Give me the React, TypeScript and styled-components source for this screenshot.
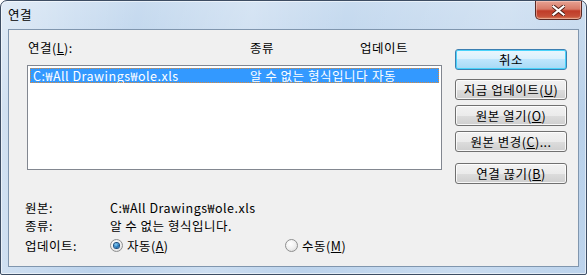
import React from "react";
import styled, { createGlobalStyle } from "styled-components";

const GlobalStyle = createGlobalStyle`
  html, body {
    margin: 0;
    padding: 0;
    background: #ffffff;
  }
  body {
    font-family: "Noto Sans CJK KR", "Noto Sans", sans-serif;
    font-size: 12.5px;
    letter-spacing: 0.5px;
    color: #000;
  }
`;

const Window = styled.div`
  box-sizing: border-box;
  width: 587px;
  height: 275px;
  display: flex;
  flex-direction: column;
  border: 1px solid #3d4d63;
  border-radius: 7px 7px 2px 2px;
  padding: 0 7px 7px 7px;
  background:
    linear-gradient(100deg, rgba(255, 255, 255, 0.45) 0%, rgba(255, 255, 255, 0) 22%,
      rgba(255, 255, 255, 0.25) 40%, rgba(255, 255, 255, 0) 55%,
      rgba(255, 255, 255, 0.2) 80%, rgba(255, 255, 255, 0) 100%),
    linear-gradient(180deg, #c9dcf0 0%, #b6cfe9 40%, #bcd3ec 100%);
  box-shadow: inset 0 0 0 1px rgba(255, 255, 255, 0.55);
`;

const TitleBar = styled.div`
  height: 28px;
  display: flex;
  align-items: flex-start;
  justify-content: space-between;
`;

const Title = styled.div`
  padding-top: 6px;
  line-height: 15px;
  color: #000;
`;

const CloseButton = styled.div`
  box-sizing: border-box;
  width: 47px;
  height: 19px;
  margin-right: -3px;
  display: flex;
  align-items: center;
  justify-content: center;
  border: 1px solid #5a2a24;
  border-top: none;
  border-radius: 0 0 5px 5px;
  background: linear-gradient(180deg, #e6a293 0%, #d77a67 45%, #c03c28 55%, #c64f38 85%, #d9835f 100%);
  box-shadow: inset 0 0 0 1px rgba(255, 220, 210, 0.45);
`;

const Content = styled.div`
  flex: 1;
  display: flex;
  flex-direction: column;
  background: #f0f0f0;
  border: 1px solid #8096ae;
  padding: 10px 0 0 16px;
`;

const TopRow = styled.div`
  display: flex;
  align-items: flex-start;
`;

const ListColumn = styled.div`
  width: 415px;
  margin-left: 2px;
  display: flex;
  flex-direction: column;
`;

const ListHeader = styled.div`
  display: grid;
  grid-template-columns: 222px 110px auto;
  padding-left: 1px;
  line-height: 15px;
  height: 15px;
  margin-bottom: 10px;
`;

const ListBox = styled.div`
  box-sizing: border-box;
  height: 105px;
  background: #fff;
  border: 1px solid #828790;
  padding: 2px;
`;

const ListRow = styled.div<{ $selected?: boolean }>`
  display: grid;
  grid-template-columns: 217px 122px auto;
  height: 15px;
  line-height: 15px;
  padding-left: 3px;
  white-space: nowrap;
  background: ${(p) => (p.$selected ? "#3399ff" : "transparent")};
  color: ${(p) => (p.$selected ? "#fff" : "#000")};
  outline: ${(p) => (p.$selected ? "1px dotted #d9893d" : "none")};
  outline-offset: -1px;
`;

const Cell = styled.span`
  overflow: visible;
`;

const ButtonColumn = styled.div`
  width: 112px;
  margin-left: 13px;
  padding-top: 9px;
  display: flex;
  flex-direction: column;
`;

const Button = styled.div<{ $primary?: boolean; $gap: number }>`
  box-sizing: border-box;
  height: 21px;
  margin-top: ${(p) => p.$gap}px;
  display: flex;
  align-items: center;
  justify-content: center;
  border-radius: 3px;
  border: 1px solid ${(p) => (p.$primary ? "#3c7fb1" : "#707070")};
  background: ${(p) =>
    p.$primary
      ? "linear-gradient(180deg, #eaf6fd 0%, #d9f0fc 50%, #bee6fd 50%, #a7d9f5 100%)"
      : "linear-gradient(180deg, #f2f2f2 0%, #ebebeb 50%, #dddddd 50%, #cfcfcf 100%)"};
  box-shadow: inset 0 0 0 1px ${(p) => (p.$primary ? "#48d3fb" : "rgba(255, 255, 255, 0.8)")};
  line-height: 15px;
  white-space: nowrap;
`;

const Details = styled.div`
  margin-top: 14px;
  display: flex;
  flex-direction: column;
`;

const DetailRow = styled.div<{ $tall?: boolean }>`
  display: grid;
  grid-template-columns: 85px auto;
  align-items: center;
  height: ${(p) => (p.$tall ? 23 : 18)}px;
  line-height: 15px;
`;

const RadioGroup = styled.div`
  display: flex;
  align-items: center;
`;

const RadioOption = styled.label`
  display: flex;
  align-items: center;
  width: 175px;
`;

const RadioCircle = styled.span<{ $checked?: boolean }>`
  box-sizing: border-box;
  width: 13px;
  height: 13px;
  border-radius: 50%;
  border: 1px solid #8e8f8f;
  background: radial-gradient(circle at 40% 35%, #ffffff 0%, #f0f0f0 50%, #d4d4d4 100%);
  margin-right: 4px;
  display: flex;
  align-items: center;
  justify-content: center;
  &::after {
    content: "";
    display: ${(p) => (p.$checked ? "block" : "none")};
    width: 5px;
    height: 5px;
    border-radius: 50%;
    background: radial-gradient(circle at 40% 35%, #8ad1f7 0%, #1a6fb5 60%, #0c4a86 100%);
    box-shadow: 0 0 0 1px #1b4e80;
  }
`;

const CloseGlyph = () => (
  <svg width="13" height="11" viewBox="0 0 13 11">
    <path
      d="M1.5 1.5 L11.5 9.5 M11.5 1.5 L1.5 9.5"
      stroke="#4a1c14"
      strokeWidth="4"
      strokeLinecap="square"
    />
    <path
      d="M1.5 1.5 L11.5 9.5 M11.5 1.5 L1.5 9.5"
      stroke="#ffffff"
      strokeWidth="2.2"
      strokeLinecap="square"
    />
  </svg>
);

const App: React.FC = () => (
  <>
    <GlobalStyle />
    <Window>
      <TitleBar>
        <Title>연결</Title>
        <CloseButton>
          <CloseGlyph />
        </CloseButton>
      </TitleBar>
      <Content>
        <TopRow>
          <ListColumn>
            <ListHeader>
              <span>
                연결(<u>L</u>):
              </span>
              <span>종류</span>
              <span>업데이트</span>
            </ListHeader>
            <ListBox>
              <ListRow $selected>
                <Cell>C:₩All Drawings₩ole.xls</Cell>
                <Cell>알 수 없는 형식입니다</Cell>
                <Cell>자동</Cell>
              </ListRow>
            </ListBox>
          </ListColumn>
          <ButtonColumn>
            <Button $primary $gap={0}>취소</Button>
            <Button $gap={9}>
              지금 업데이트(<u>U</u>)
            </Button>
            <Button $gap={5}>
              원본 열기(<u>O</u>)
            </Button>
            <Button $gap={5}>
              원본 변경(<u>C</u>)...
            </Button>
            <Button $gap={11}>
              연결 끊기(<u>B</u>)
            </Button>
          </ButtonColumn>
        </TopRow>
        <Details>
          <DetailRow>
            <span>원본:</span>
            <span>C:₩All Drawings₩ole.xls</span>
          </DetailRow>
          <DetailRow>
            <span>종류:</span>
            <span>알 수 없는 형식입니다.</span>
          </DetailRow>
          <DetailRow $tall>
            <span>업데이트:</span>
            <RadioGroup>
              <RadioOption>
                <RadioCircle $checked />
                자동(<u>A</u>)
              </RadioOption>
              <RadioOption>
                <RadioCircle />
                수동(<u>M</u>)
              </RadioOption>
            </RadioGroup>
          </DetailRow>
        </Details>
      </Content>
    </Window>
  </>
);

export default App;
